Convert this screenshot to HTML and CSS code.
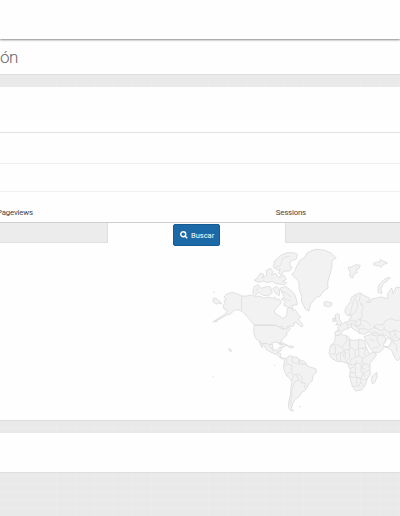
FILE: index.html
```html
<!DOCTYPE html>
<html lang="es">
<head>
<meta charset="utf-8">
<title>Administración</title>
<link rel="stylesheet" href="styles.css">
</head>
<body>
<header class="topbar"></header>
<h1 class="title">ón</h1>
<main class="panel">
  <div class="row row-a"></div>
  <div class="row row-b"></div>
  <div class="row row-c"></div>
  <div class="labels"><span class="label-pages">Pageviews</span><span class="label-sessions">Sessions</span></div>
  <div class="filters">
    <div class="field field-left"></div>
    <button class="search"><svg class="icon" viewBox="0 0 16 16"><circle cx="6.5" cy="6.5" r="5" /><path d="M10.5 10.5L14.5 14.5" /></svg>Buscar</button>
    <div class="field field-right"></div>
  </div>
  <svg class="map" viewBox="0 243 400 178">
    <!-- Americas -->
    <g class="land" transform="translate(210 246) scale(.3333)">
      <path d="M95 150L82 143 64 139 48 146 42 154 50 160 41 165 46 171 39 178 42 189 52 193 50 199 40 208 28 215 8 228 30 219 50 207 63 203 72 193 84 191 95 196 105 204 116 217 127 231 133 238H197L207 243 219 241 212 249 223 248 235 240 246 242 254 236 250 232 258 229 268 238 276 243 279 238 272 228 264 219 272 214 264 204 255 190 249 195 242 184 232 186 231 200 228 212 218 217 206 208 196 204 193 194 201 184 209 177 214 169 208 159 199 162 195 153 188 157 176 154 161 156 148 150 137 153 124 147 110 150z"/>
      <path d="M133 238H197L207 243 216 248 225 250 237 243 241 248 236 255 230 260 231 267 220 277 213 285 216 298 209 296 206 289 195 288 184 292 177 302 168 292 156 293 146 284 137 277 132 264 131 249z"/>
      <path d="M148 285L156 293 168 292 181 297 187 294 188 306 193 313 204 311 208 304 217 304 211 316 201 319 212 323 211 333 220 337 226 336 222 340 211 336 201 326 187 321 169 311 163 299 156 293 158 306 151 296z"/>
      <path d="M224 341L233 333 241 329 251 333 262 334 268 341 280 345 287 350 291 360 304 364 318 369 319 379 309 390 307 404 298 412 292 423 285 433 276 439 270 448 260 458 252 465 247 477 244 488 251 495 240 493 235 482 237 464 242 444 243 424 246 408 240 398 230 389 222 372 221 356z"/>
      <path d="M206 292l10-2 12 5 8 5-8-1-9-4zM235 302l8-3 9 4-8 3zM218 301l6 0-3 3z"/>
      <path d="M245 85L255 76 259 62 270 43 285 34 291 21 315 10 342 12 365 22 379 36 366 42 366 63 358 91 353 110 354 127 341 135 329 152 318 154 302 174 297 195 286 189 275 167 274 147 268 132 266 106 258 98z"/>
      <path d="M190 63L194 45 211 29 231 20 250 20 262 25 259 39 242 45 239 58 247 64 239 75 222 75 214 87 205 80 211 69 200 72z"/>
      <path d="M132 103L144 94 152 81 162 86 157 96 169 89 170 72 181 67 190 77 184 87 198 82 205 94 221 87 229 100 217 106 230 110 223 116 198 113 187 106 173 110 160 105 145 109z"/>
      <path d="M128 142L132 122 143 116 155 127 167 122 181 123 187 140 174 150 157 147 146 138 137 149z"/>
      <path d="M188 128l12-7 9 9-1 19-9-5zM211 126l15-5 13 9 14 13 6 17 3 16-16 2 3 12-17-8-11-4 5-11-12-7 9-9-7-10z"/>
      <path d="M10 156l10 2 11 9 4 7-10-3-4 4-12-8zM55 308l7 2 3 6-6-1zM10 139h5M15 227h8M267 483l6-2M192 358h4M8 392l4 1"/>
    </g>
    <g class="borders" transform="translate(210 246) scale(.3333)">
      <path d="M95 150V196M133 238H197M247 332l-1 16 16 5 6-12M222 360l12-6 12 4-2 16 5 13 17-3 10 9 0 14 11 6-4 13M232 338l-2 15M230 388l11-11M251 389l-6 16M258 386l8 15-12 7-8 23-2 25-3 17 4 14M265 403l12 9 8-2M268 341l0 14 20-1M274 348l4 8M194 65l17-6 8-23M220 35l20-5M138 135l8-11M214 135l17 8 14 12M218 156l24 8M177 302l9 5 3 10"/>
    </g>
    <!-- Europe, Africa and Asia -->
    <g class="land" transform="translate(310 246) scale(.3333)">
      <path d="M114 65L126 62 137 56 151 58 147 68 137 71 143 79 130 86 129 96 119 91 121 80z"/>
      <path d="M190 52l13-5 5 4 4-11 7 5 13 6-12 5-8 8-7-5-14-2z"/>
      <path d="M204 139L205 120 216 106 229 96 241 95 233 104 221 112 213 128 216 142z"/>
      <path d="M42 169l8-3 8 3 7 1 1 7-10 6-8-3-5 0z"/>
      <path d="M76 207l5-5 8 5-1 13 7 8-3 8-15 1 5-8-6-8zM68 218l7-3 2 10-8 3z"/>
      <path d="M105 192L110 181 120 169 125 153 138 145 150 140 162 149 179 156 178 165 169 169 181 169 184 160 202 155 215 153 234 158 233 143 245 126 249 143 258 124 273 125V278L256 275 246 284 237 278 227 266 220 272 204 263 190 264 177 257 164 265 148 262 139 255 130 249 122 243 113 249 101 251 91 266 76 270 75 258 88 254 83 244 93 238 104 229 117 226 118 218 124 216 122 204 113 209 106 203z"/>
      <path d="M76 270L91 266 107 268 116 273 118 280 133 284 148 280 164 284 168 302 178 323 192 319 200 324 191 339 180 351 180 371 181 385 172 399 166 417 155 432 137 435 127 421 119 392 121 371 112 352 97 347 81 346 65 337 57 322 61 300 74 286z"/>
      <path d="M163 272L181 265 198 270 218 266 228 276 226 284 219 293 223 304 209 319 190 319 180 306 170 289z"/>
      <path d="M223 302L237 301 246 285 273 280V331L263 345 254 335 246 315 239 308z"/>
      <path d="M187 390l7-6 6-5 2 12-8 19-7 3-3-12z"/>
    </g>
    <g class="borders" transform="translate(310 246) scale(.3333)">
      <path d="M117 213l7-23 7-27 10-15M138 160l6 20-9 20-11 8M151 143l-3 21 7 16M155 171l6 12-7 14 3 15-8 8 4 15-9 8M104 229l10 7 12-4 11 9 15-4M117 226l10-4 10 5 9-7 14 3M137 241l9 8 16-2 14 6 14-8 14 2M127 228l-4 16M113 236l-1 12M137 225l0 16M160 223l12 5 10 11M78 251l14 4M151 235l10 8M148 262l0-12M192 245l9-10 18 2 7-13 19-6 15 6 13-2M192 235l4 12 17 7 12-4 14 9 17-6 15 5M223 239l-1 12M238 256l5 22 16-18M183 266l10-10 9 8M218 260v14M250 250l9 22M235 272l-12 22M248 288l12 10 0 17M205 270l-5 13 13 19M178 278l16 8M189 306l16-3"/>
      <path d="M107 268l4 16-15 20-17-10-17 5M96 304l7 12-3 17M62 323l18 2 16-6 12-9 12 1 0-26M76 300v22M80 325l0 19M91 321l1 26M118 280v23l18 10M146 281v26M146 307h21M136 313l10-6M116 312l4 23-12 10M106 318l-1 22M136 313l-1 21-15 9M135 334l11-4 13 7 18-11M146 307v23M166 302l-2 26M159 337l-4 13 20 5M122 345l-2 12 16-2 4-12M120 367l13-4 5-11 16 3-1 21 8 8 9-9 10-2M119 380h16l4 14 13 2 8-12M119 392l32 4 2 15-15 11-9-2M152 396l9 6 11-4M153 411l9 9M136 381l2-18M162 354l-6 11 9 6M172 363l8-2M141 397l-1 18M141 418l11 4M159 377l5 16M118 352l-12-5"/>
    </g>
  </svg>
</main>
<section class="footer-panel"></section>
</body>
</html>
```

FILE: styles.css
```css
* { box-sizing: border-box; }
body {
  margin: 0;
  height: 516px;
  overflow: hidden;
  font-family: Roboto, "Liberation Sans", sans-serif;
  background-color: #e9e9e9;
  background-image:
    repeating-linear-gradient(0deg, transparent 0 7px, rgba(255,255,255,.15) 7px 8px),
    repeating-linear-gradient(90deg, transparent 0 18px, rgba(255,255,255,.1) 18px 19px);
}
.topbar {
  position: relative;
  height: 39px;
  background: #fefefe;
  box-shadow: 0 1px 2px #888;
}
.title {
  margin: 0;
  height: 36px;
  padding-top: 8px;
  background: #fefefe;
  border-bottom: 1px solid #e0e0e0;
  font-size: 17px;
  line-height: 20px;
  font-weight: 300;
  letter-spacing: -.6px;
  color: #666;
}
.panel {
  margin-top: 12px;
  height: 334px;
  background: #fefefe;
  border-bottom: 1px solid #ddd;
}
.row { border-bottom: 1px solid #e3e3e3; }
.row-a { height: 46px; }
.row-b { height: 31px; border-color: #eee; }
.row-c { height: 28px; border-color: #f0f0f0; }
.labels {
  display: flex;
  justify-content: space-between;
  height: 31px;
  padding: 15px 94px 0 0;
  border-bottom: 1px solid #cfcfcf;
  font-size: 7.8px;
  line-height: 12px;
  letter-spacing: -.15px;
  color: #444;
}
.label-pages { margin-left: -3px; }
.filters { display: flex; justify-content: space-between; height: 20px; }
.field { height: 20px; background: #ececec; border: 1px solid #dfdfdf; border-top: 0; }
.field-left { width: 108px; border-left: 0; }
.field-right { width: 115px; border-right: 0; }
.search {
  display: flex;
  align-items: center;
  gap: 3px;
  width: 47px;
  height: 22px;
  margin: 1px auto 0 65px;
  padding: 0 0 0 6px;
  border: 1px solid #155b94;
  border-radius: 2px;
  background: #1b69a6;
  color: #fff;
  font: 7.5px Roboto, sans-serif;
}
.icon { width: 8px; height: 8px; flex: none; fill: none; stroke: #fff; stroke-width: 2.8; }
.map { display: block; width: 400px; height: 178px; }
.land { fill: #f2f2f2; stroke: #dcdcdc; stroke-width: 2.6; stroke-linejoin: round; }
.borders { fill: none; stroke: #dedede; stroke-width: 2.3; }
.footer-panel {
  height: 40px;
  margin-top: 12px;
  background: #fefefe;
  border-bottom: 1px solid #dedede;
}
```
